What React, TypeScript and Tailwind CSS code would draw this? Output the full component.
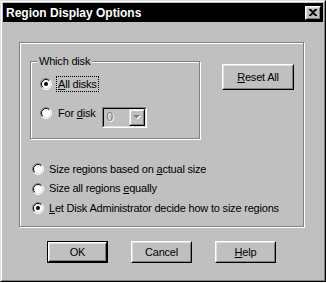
import React from 'react';

// Win95 style radio button
const Radio: React.FC<{ checked?: boolean }> = ({ checked }) => (
  <svg width="12" height="12" viewBox="0 0 12 12" className="shrink-0">
    <circle cx="6" cy="6" r="5" fill="#fff" />
    <path d="M2.1 9.9A5.5 5.5 0 0 1 9.9 2.1" stroke="#808080" fill="none" />
    <path d="M9.9 2.1A5.5 5.5 0 0 1 2.1 9.9" stroke="#fff" fill="none" />
    <path d="M2.8 9.2A4.5 4.5 0 0 1 9.2 2.8" stroke="#000" fill="none" />
    <path d="M9.2 2.8A4.5 4.5 0 0 1 2.8 9.2" stroke="#dfdfdf" fill="none" />
    {checked && <circle cx="6" cy="6" r="2" fill="#000" />}
  </svg>
);

const Button: React.FC<{ children: React.ReactNode; isDefault?: boolean; className?: string }> = ({
  children,
  isDefault,
  className = '',
}) => (
  <div className={`${isDefault ? 'border border-black' : ''} ${className}`}>
    <div className="h-full border border-t-white border-l-white border-b-black border-r-black">
      <div className="h-full flex items-center justify-center border border-t-[#dfdfdf] border-l-[#dfdfdf] border-b-[#808080] border-r-[#808080] bg-[#c0c0c0]">
        {children}
      </div>
    </div>
  </div>
);

export default function App() {
  return (
    <div className="w-[326px] h-[283px] bg-white font-['Liberation_Sans',Arial,sans-serif] text-[11px] tracking-[-0.2px] text-black leading-none whitespace-nowrap">
      {/* window frame */}
      <div className="h-[282px] border border-t-[#dfdfdf] border-l-[#dfdfdf] border-b-black border-r-black">
        <div className="h-full border border-t-white border-l-white border-b-[#808080] border-r-[#808080] bg-[#c0c0c0] p-px">
          {/* title bar */}
          <div className="h-[19px] bg-black flex items-center justify-between pl-[3px] pr-[2px]">
            <span className="text-white font-bold text-[12px] tracking-[0px]">Region Display Options</span>
            <div className="w-[16px] h-[14px] border border-t-white border-l-white border-b-black border-r-black">
              <div className="h-full flex items-center justify-center border border-t-[#dfdfdf] border-l-[#dfdfdf] border-b-[#808080] border-r-[#808080] bg-[#c0c0c0]">
                <svg width="8" height="7" viewBox="0 0 8 7">
                  <path d="M0 0h2l2 2 2-2h2v1L5 3.5 8 6v1H6L4 5 2 7H0V6l3-2.5L0 1z" fill="#000" />
                </svg>
              </div>
            </div>
          </div>

          {/* main group frame */}
          <div className="mt-[20px] ml-[16px] w-[285px] h-[185px] border border-[#808080] shadow-[inset_1px_1px_0_#fff,1px_1px_0_#fff] pt-[18px] pl-[10px]">
            <div className="flex">
              {/* which disk group */}
              <div className="relative w-[170px] h-[78px] border border-[#808080] shadow-[inset_1px_1px_0_#fff,1px_1px_0_#fff]">
                <span className="absolute left-[6px] top-[-6px] bg-[#c0c0c0] px-[2px]">Which disk</span>
                <div className="pt-[14px] pl-[9px]">
                  <div className="flex items-center h-[16px]">
                    <Radio checked />
                    <span className="ml-[4px] border border-dotted border-black px-[1px] h-[16px] flex items-center">
                      <span className="underline">A</span>ll disks
                    </span>
                  </div>
                  <div className="flex items-center mt-[13px] h-[16px]">
                    <Radio />
                    <span className="ml-[6px]">
                      For <span className="underline">d</span>isk
                    </span>
                    <div className="ml-[6px] mt-[8px] w-[45px] h-[21px] border border-t-[#808080] border-l-[#808080] border-b-white border-r-white">
                      <div className="h-full flex border border-t-black border-l-black border-b-[#dfdfdf] border-r-[#dfdfdf] bg-[#c0c0c0]">
                        <span className="flex-1 flex items-center pl-[3px] text-[12px] text-[#808080] [text-shadow:1px_1px_0_#fff]">0</span>
                        <div className="w-[16px] h-full border border-t-[#dfdfdf] border-l-[#dfdfdf] border-b-black border-r-black">
                          <div className="h-full flex items-center justify-center border border-t-white border-l-white border-b-[#808080] border-r-[#808080]">
                            <svg width="8" height="5" viewBox="0 0 8 5">
                              <path d="M1 1h7L4.5 4.5z" fill="#fff" />
                              <path d="M0 0h7L3.5 3.5z" fill="#808080" />
                            </svg>
                          </div>
                        </div>
                      </div>
                    </div>
                  </div>
                </div>
              </div>

              <Button className="ml-[22px] mt-[3px] w-[72px] h-[26px]">
                <span>
                  <span className="underline">R</span>eset All
                </span>
              </Button>
            </div>

            {/* sizing options */}
            <div className="mt-[22px] ml-[2px] flex flex-col gap-[3.5px]">
              <div className="flex items-center h-[16px]">
                <Radio />
                <span className="ml-[5px]">
                  Size regions based on <span className="underline">a</span>ctual size
                </span>
              </div>
              <div className="flex items-center h-[16px]">
                <Radio />
                <span className="ml-[5px]">
                  Size all regions <span className="underline">e</span>qually
                </span>
              </div>
              <div className="flex items-center h-[16px]">
                <Radio checked />
                <span className="ml-[5px]">
                  <span className="underline">L</span>et Disk Administrator decide how to size regions
                </span>
              </div>
            </div>
          </div>

          {/* buttons */}
          <div className="mt-[14px] ml-[44px] flex gap-[23px]">
            <Button isDefault className="w-[61px] h-[22px]">OK</Button>
            <Button className="w-[61px] h-[22px]">Cancel</Button>
            <Button className="w-[61px] h-[22px]">
              <span>
                <span className="underline">H</span>elp
              </span>
            </Button>
          </div>
        </div>
      </div>
    </div>
  );
}
